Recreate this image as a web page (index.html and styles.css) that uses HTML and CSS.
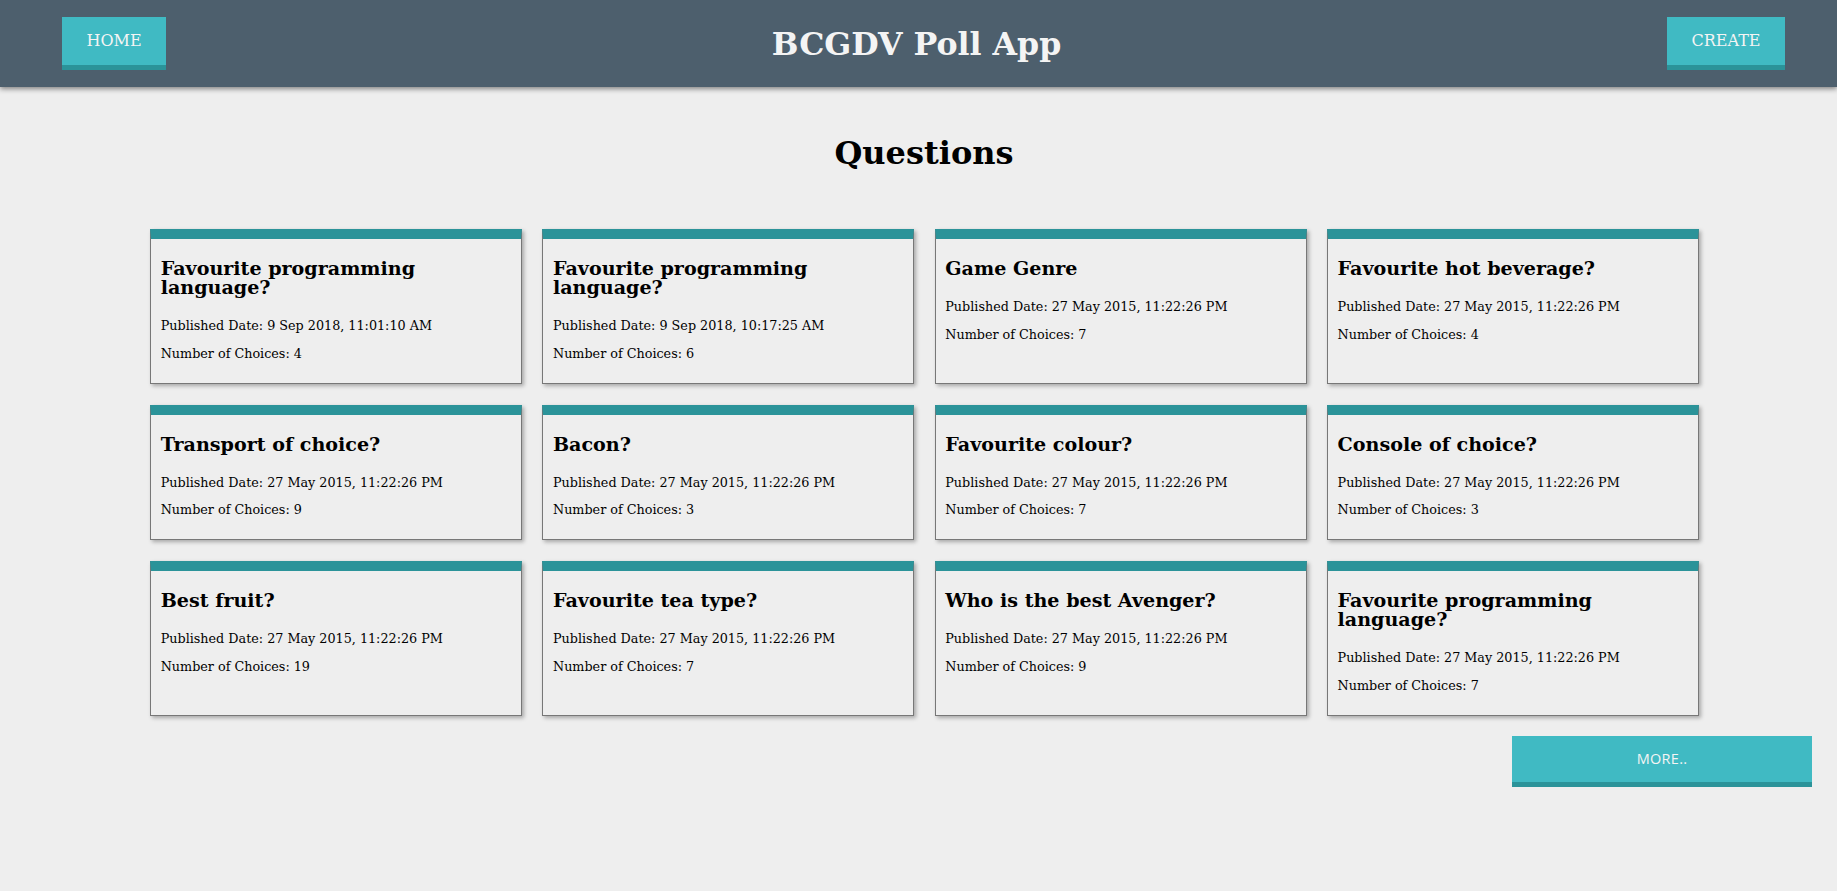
FILE: index.html
```html
<!DOCTYPE html>
<html lang="en">
<head>
<meta charset="utf-8">
<title>BCGDV Poll App</title>
<link rel="stylesheet" href="styles.css">
</head>
<body>
<header class="topbar">
  <a class="btn" href="#">HOME</a>
  <h1 class="app-title">BCGDV Poll App</h1>
  <a class="btn" href="#">CREATE</a>
</header>
<main class="main">
  <h1 class="page-title">Questions</h1>
  <div class="grid">
    <div class="card"><h3>Favourite programming language?</h3><p>Published Date: 9 Sep 2018, 11:01:10 AM</p><p>Number of Choices: 4</p></div>
    <div class="card"><h3>Favourite programming language?</h3><p>Published Date: 9 Sep 2018, 10:17:25 AM</p><p>Number of Choices: 6</p></div>
    <div class="card"><h3>Game Genre</h3><p>Published Date: 27 May 2015, 11:22:26 PM</p><p>Number of Choices: 7</p></div>
    <div class="card"><h3>Favourite hot beverage?</h3><p>Published Date: 27 May 2015, 11:22:26 PM</p><p>Number of Choices: 4</p></div>
    <div class="card"><h3>Transport of choice?</h3><p>Published Date: 27 May 2015, 11:22:26 PM</p><p>Number of Choices: 9</p></div>
    <div class="card"><h3>Bacon?</h3><p>Published Date: 27 May 2015, 11:22:26 PM</p><p>Number of Choices: 3</p></div>
    <div class="card"><h3>Favourite colour?</h3><p>Published Date: 27 May 2015, 11:22:26 PM</p><p>Number of Choices: 7</p></div>
    <div class="card"><h3>Console of choice?</h3><p>Published Date: 27 May 2015, 11:22:26 PM</p><p>Number of Choices: 3</p></div>
    <div class="card"><h3>Best fruit?</h3><p>Published Date: 27 May 2015, 11:22:26 PM</p><p>Number of Choices: 19</p></div>
    <div class="card"><h3>Favourite tea type?</h3><p>Published Date: 27 May 2015, 11:22:26 PM</p><p>Number of Choices: 7</p></div>
    <div class="card"><h3>Who is the best Avenger?</h3><p>Published Date: 27 May 2015, 11:22:26 PM</p><p>Number of Choices: 9</p></div>
    <div class="card"><h3>Favourite programming language?</h3><p>Published Date: 27 May 2015, 11:22:26 PM</p><p>Number of Choices: 7</p></div>
  </div>
  <div class="more-row">
    <button class="more-btn" type="button">MORE..</button>
  </div>
</main>
</body>
</html>
```

FILE: styles.css
```css
html, body {
  margin: 0;
  padding: 0;
}
body {
  background: #eeeeee;
  font-family: "DejaVu Serif", serif;
  color: #000;
}
.topbar {
  height: 87px;
  box-sizing: border-box;
  background: #4d5f6d;
  display: flex;
  align-items: center;
  justify-content: space-between;
  padding: 0 52px 0 62px;
  box-shadow: 0 2px 5px rgba(0, 0, 0, 0.45);
  position: relative;
  z-index: 1;
}
.btn {
  display: block;
  height: 48px;
  line-height: 48px;
  padding: 0 24.5px;
  background: #40bac3;
  border-bottom: 5px solid #2b9399;
  color: #f4f4f4;
  font-size: 16px;
  text-decoration: none;
}
.app-title {
  margin: 0;
  font-size: 31.6px;
  font-weight: bold;
  color: #f4f4f4;
}
.main {
  padding-top: 1px;
}
.page-title {
  margin: 46px 0 57px 150px;
  width: 1548px;
  text-align: center;
  font-size: 32px;
  font-weight: bold;
}
.grid {
  margin-left: 150px;
  display: grid;
  grid-template-columns: repeat(4, 372px);
  column-gap: 20.3px;
  row-gap: 21px;
}
.card {
  border: 1px solid #777;
  border-top: 10px solid #2b9399;
  padding: 0 10px 9px 9.7px;
  box-shadow: 2px 2px 4px rgba(0, 0, 0, 0.3);
  background: #eeeeee;
}
.card h3 {
  font-size: 19.1px;
  line-height: 19px;
  margin: 20px 0 21px;
  font-weight: bold;
}
.card p {
  font-size: 12.75px;
  margin: 12.8px 0;
}
.card h3 + p {
  margin-top: 0;
}
.more-row {
  display: flex;
  justify-content: flex-end;
  padding: 20px 25px 0 0;
}
.more-btn {
  width: 300px;
  height: 51px;
  box-sizing: border-box;
  background: #40bac3;
  border: 0;
  border-bottom: 5px solid #2b9399;
  color: #f4f4f4;
  font-family: "Open Sans", sans-serif;
  font-size: 14.5px;
  letter-spacing: 0.3px;
  padding: 0;
}
```
